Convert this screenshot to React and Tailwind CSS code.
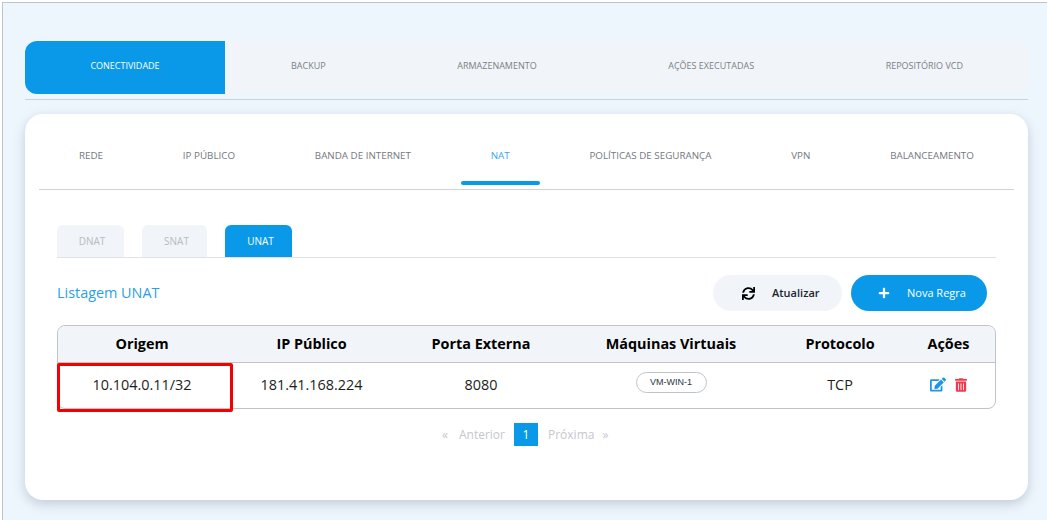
import { FaSync, FaPlus, FaEdit, FaTrashAlt } from "react-icons/fa";

const mainTabs = ["BACKUP", "ARMAZENAMENTO", "AÇÕES EXECUTADAS", "REPOSITÓRIO VCD"];
const subTabs = ["REDE", "IP PÚBLICO", "BANDA DE INTERNET", "NAT", "POLÍTICAS DE SEGURANÇA", "VPN", "BALANCEAMENTO"];
const grid = "grid grid-cols-[168px_171px_168px_212px_126px_1fr_1px]";

export default function App() {
  return (
    <div className="h-[520px] w-[1047px] overflow-hidden bg-white pl-[2px] pt-[2px] font-['Open_Sans',sans-serif]">
      <div className="h-[518px] border-l border-t border-[#bfc3ca] bg-[#eef6fd] pl-[22px] pr-[19px] pt-[38px]">
        {/* abas principais */}
        <div className="border-b border-[#c9d1dc] pb-[5px]">
          <div className="flex h-[53px] overflow-hidden rounded-xl bg-[#f1f5f9] text-[9px]">
            <div className="flex w-[200px] items-center justify-center bg-[#0a99e9] pb-[4px] text-white">CONECTIVIDADE</div>
            <div className="flex flex-1 items-center justify-between pb-[4px] pl-[66px] pr-[65px] text-[#7b7f85]">
              {mainTabs.map((t) => (
                <span key={t}>{t}</span>
              ))}
            </div>
          </div>
        </div>

        {/* card */}
        <div className="mt-[14px] h-[386px] rounded-[18px] bg-white px-[14px] pt-[14px] shadow-[0_4px_12px_rgba(90,110,130,0.3)]">
          <div className="flex h-[62px] gap-[19.8px] border-b border-[#cfd4da] pl-[10px] text-[9.8px] text-[#74787e]">
            {subTabs.map((t) =>
              t === "NAT" ? (
                <div key={t} className="flex h-[57px] flex-col text-[#35a8ef]">
                  <div className="flex h-[53px] items-center px-[30px] pt-[4px]">{t}</div>
                  <div className="h-[4px] rounded-full bg-[#0a99e9]" />
                </div>
              ) : (
                <div key={t} className="flex h-[57px] items-center px-[30px]">
                  {t}
                </div>
              )
            )}
          </div>

          <div className="px-[18px] pt-[35px]">
            {/* DNAT SNAT UNAT */}
            <div className="flex h-[33px] gap-[18px] border-b border-[#dfe2e6] text-[10px]">
              <div className="flex h-[32px] w-[67px] items-center justify-center rounded-t-md bg-[#f1f4f8] pl-[3px] text-[#b8bcc2]">DNAT</div>
              <div className="flex h-[32px] w-[65px] items-center justify-center rounded-t-md bg-[#f1f4f8] pl-[4px] text-[#b8bcc2]">SNAT</div>
              <div className="flex h-[32px] w-[67px] items-center justify-center rounded-t-md bg-[#0a99e9] pl-[4px] text-white">UNAT</div>
            </div>

            <div className="mt-[17px] flex h-[36px] items-center">
              <span className="text-[14.4px] text-[#2a9fe6]">Listagem UNAT</span>
              <div className="ml-auto mr-[9px] flex w-[274px] gap-[9px] text-[11px] font-semibold">
                <button className="flex h-[36px] w-[129px] items-center rounded-full bg-[#f1f5f9] pl-[29px] text-[#1c2530]">
                  <FaSync className="h-[13px] w-[13px] text-black" />
                  <span className="ml-[17px]">Atualizar</span>
                </button>
                <button className="flex h-[36px] w-[136px] items-center rounded-full bg-[#0a99e9] pl-[27px] font-normal text-white">
                  <FaPlus className="h-[12px] w-[12px]" />
                  <span className="ml-[17px]">Nova Regra</span>
                </button>
              </div>
            </div>

            {/* tabela */}
            <div className="relative mt-[14px] w-[939px] rounded-lg border border-[#bfc3ca] text-center text-[#1d1d1d]">
              <div className={`${grid} h-[37px] items-center rounded-t-lg border-b border-[#bfc3ca] bg-[#f1f5f9] pb-[1px] text-[14.4px] font-bold text-black`}>
                <div>Origem</div>
                <div>IP Público</div>
                <div>Porta Externa</div>
                <div>Máquinas Virtuais</div>
                <div>Protocolo</div>
                <div>Ações</div>
              </div>
              <div className={`${grid} h-[45px] items-center pb-[2px] text-[14.4px]`}>
                <div>10.104.0.11/32</div>
                <div>181.41.168.224</div>
                <div>8080</div>
                <div className="flex justify-center">
                  <span className="mb-[4px] flex h-[21px] w-[71px] items-center justify-center rounded-full border border-[#bfc3ca] font-['Liberation_Sans',sans-serif] text-[9px] text-[#2b3440]">
                    VM-WIN-1
                  </span>
                </div>
                <div>TCP</div>
                <div className="flex items-center justify-center gap-[9px] pr-[1px]">
                  <FaEdit className="h-[15px] w-[16px] text-[#1f96e8]" />
                  <FaTrashAlt className="h-[14px] w-[12px] text-[#f0394d]" />
                </div>
              </div>
              <div className="absolute left-[-1px] top-[37px] h-[49px] w-[176px] rounded-[2px] border-[3px] border-[#f50000]" />
            </div>

            {/* paginacao */}
            <div className="mt-[14px] flex h-[23px] items-center text-[12px] text-[#c4c7cc]">
              <span className="ml-[385px]">«</span>
              <span className="ml-[11px]">Anterior</span>
              <span className="ml-[9px] flex h-[23px] w-[24px] items-center justify-center bg-[#0a99e9] text-white">1</span>
              <span className="ml-[10px]">Próxima</span>
              <span className="ml-[8px]">»</span>
            </div>
          </div>
        </div>
      </div>
    </div>
  );
}
